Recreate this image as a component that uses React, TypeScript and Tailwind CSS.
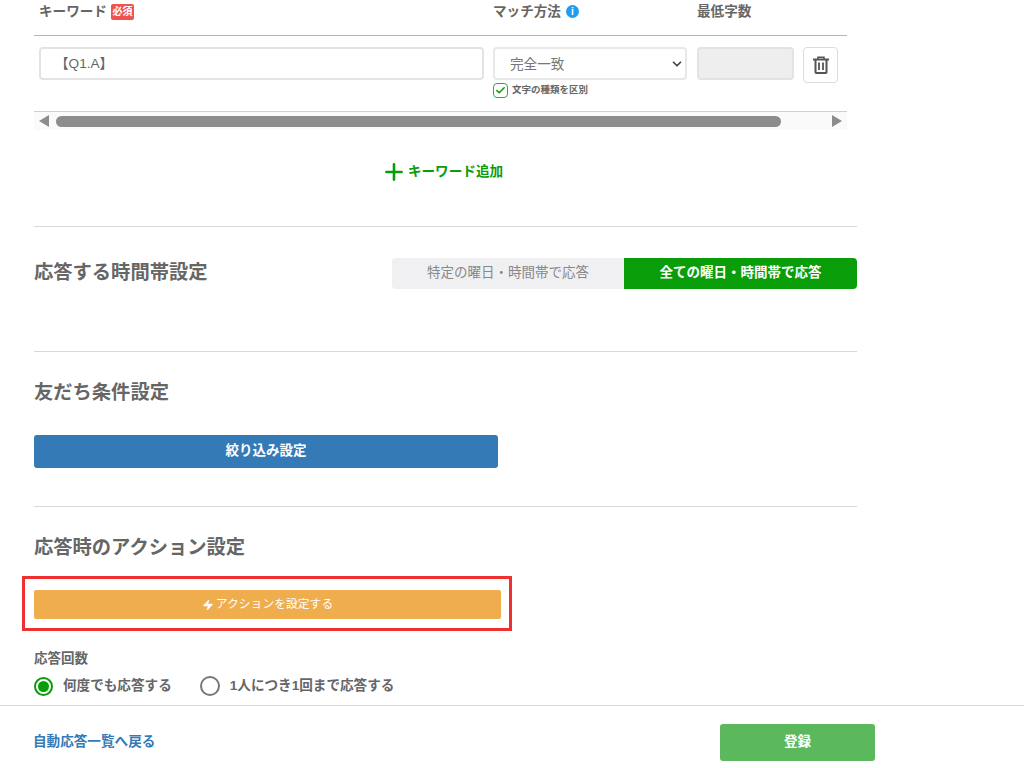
import { Check, ChevronDown, Plus, Zap } from "lucide-react";

const FONT = "font-['Liberation_Sans','Noto_Sans_CJK_JP',sans-serif]";

function Divider() {
  return <hr className="border-0 border-t border-[#d9d9d9]" />;
}

function TrashIcon() {
  return (
    <svg width="16" height="18" viewBox="0 0 16 18" fill="none" stroke="#555" strokeWidth="2">
      <path d="M0 3.5h16" />
      <path d="M5 3V1.2h6V3" strokeWidth="1.6" />
      <path d="M2.5 4v12.2a.8.8 0 0 0 .8.8h9.4a.8.8 0 0 0 .8-.8V4" />
      <path d="M6 6.5v7.5M10 6.5v7.5" strokeWidth="1.8" />
    </svg>
  );
}

function KeywordTable() {
  return (
    <div className="w-[813px]">
      <div className="h-[36px] border-b border-[#b5b5b5] flex pl-[5px] text-[13.6px] font-bold text-[#666]">
        <div className="w-[454px] flex items-start gap-[4px] pt-[1px] h-[24px]">
          <span className="leading-[20px] mt-[1px]">キーワード</span>
          <span className="bg-[#ef5350] text-white text-[10px] leading-[16px] h-[16px] w-[23px] text-center rounded-[2px] mt-[3px]">必須</span>
        </div>
        <div className="w-[204px] flex items-start gap-[5px] pt-[1px]">
          <span className="leading-[20px] mt-[1px]">マッチ方法</span>
          <span className="w-[13px] h-[13px] mt-[4px] rounded-full bg-[#1e9df1] text-white text-[10px] leading-[13px] text-center font-bold">i</span>
        </div>
        <div className="pt-[2px] leading-[20px]">最低字数</div>
      </div>

      <div className="h-[76px] flex pl-[5px] pt-[11px] border-b border-[#cfcfcf]">
        <div className="w-[445px] h-[33px] border-2 border-[#e3e3e3] rounded-[4px] pl-[14px] text-[13.6px] leading-[29px] text-[#666]">【Q1.A】</div>
        <div className="ml-[9px] w-[194px]">
          <div className="h-[33px] border-2 border-[#e8e8e8] rounded-[4px] pl-[15px] pr-[1px] pt-[3px] flex items-center justify-between text-[13.6px] text-[#777]">
            <span>完全一致</span>
            <ChevronDown size={14} strokeWidth={3} className="text-[#444] -mt-[3px]" />
          </div>
          <div className="flex items-center gap-[4px] mt-[3px]">
            <span className="w-[15px] h-[15px] border-[1.5px] border-[#2fa84a] rounded-[4px] flex items-center justify-center">
              <Check size={11} strokeWidth={3.5} className="text-[#0a9d0a]" />
            </span>
            <span className="text-[9.5px] font-bold text-[#666]">文字の種類を区別</span>
          </div>
        </div>
        <div className="ml-[10px] w-[97px] h-[33px] bg-[#eeeeee] border-2 border-[#e3e3e3] rounded-[4px]" />
        <div className="ml-[9px] w-[35px] h-[36px] border border-[#dcdcdc] rounded-[4px] flex items-center justify-center">
          <TrashIcon />
        </div>
      </div>

      <div className="h-[18px] bg-[#fafafa] flex items-center px-[5px] gap-[7px]">
        <span className="w-0 h-0 border-y-[6px] border-y-transparent border-r-[10px] border-r-[#8c8c8c]" />
        <div className="w-[725px] h-[11px] bg-[#8c8c8c] rounded-full" />
        <span className="ml-auto w-0 h-0 border-y-[6px] border-y-transparent border-l-[10px] border-l-[#8c8c8c]" />
      </div>
    </div>
  );
}

export default function App() {
  return (
    <div className={`${FONT} h-[768px] overflow-hidden bg-white flex flex-col`}>
      <main className="h-[705px] w-[857px] pl-[34px] overflow-hidden">
        <KeywordTable />

        <div className="w-[813px] h-[96px] flex items-start justify-center pt-[29px] pl-[3px]">
          <button className="flex items-center gap-[1px] text-[13.6px] font-bold text-[#0a9d0a] h-[26px]">
            <Plus size={26} strokeWidth={2.4} />
            キーワード追加
          </button>
        </div>

        <Divider />
        <section className="h-[124px] flex items-start justify-between pt-[31px]">
          <h2 className="text-[19.3px] font-bold text-[#666] leading-[30px]">応答する時間帯設定</h2>
          <div className="flex w-[465px] h-[31px] text-[13.5px] leading-[30px] text-center">
            <div className="w-[232px] bg-[#f0f0f3] text-[#888] rounded-l-[4px]">特定の曜日・時間帯で応答</div>
            <div className="flex-1 bg-[#0a9d0a] text-white font-bold rounded-r-[4px]">全ての曜日・時間帯で応答</div>
          </div>
        </section>

        <Divider />
        <section className="h-[154px] pt-[26px]">
          <h2 className="text-[19.3px] font-bold text-[#666] leading-[30px]">友だち条件設定</h2>
          <button className="block mt-[27px] w-[464px] h-[33px] bg-[#337ab7] rounded-[3px] text-white text-[13.5px] font-bold">絞り込み設定</button>
        </section>

        <Divider />
        <section className="pt-[26px]">
          <h2 className="text-[19.3px] font-bold text-[#666] leading-[30px]">応答時のアクション設定</h2>
          <div className="-ml-[12px] mt-[13px] w-[490px] h-[55px] border-[3px] border-[#ef3030] pl-[9px] pt-[11px]">
            <button className="w-[467px] h-[29px] bg-[#f0ad4e] rounded-[2px] text-white text-[11.8px] flex items-center justify-center gap-[2px]">
              <Zap size={12} fill="currentColor" strokeWidth={1} />
              アクションを設定する
            </button>
          </div>
          <div className="mt-[18px] text-[13.5px] font-bold text-[#666] leading-[20px]">応答回数</div>
          <div className="mt-[7px] flex items-center text-[13.6px] font-bold text-[#666] leading-[20px]">
            <span className="w-[19px] h-[19px] rounded-full border-2 border-[#0a9d0a] flex items-center justify-center">
              <span className="w-[11px] h-[11px] rounded-full bg-[#0a9d0a]" />
            </span>
            <span className="ml-[10px]">何度でも応答する</span>
            <span className="ml-[28px] w-[20px] h-[20px] rounded-full border-2 border-[#777]" />
            <span className="ml-[10px]">1人につき1回まで応答する</span>
          </div>
        </section>
      </main>

      <footer className="flex-1 border-t border-[#d9d9d9] pl-[33px] pt-[18px] flex items-start">
        <a className="text-[13.6px] font-bold text-[#337ab7] w-[687px] leading-[36px]">自動応答一覧へ戻る</a>
        <button className="w-[155px] h-[37px] bg-[#5cb85c] rounded-[3px] text-white text-[13.5px] font-bold">登録</button>
      </footer>
    </div>
  );
}
